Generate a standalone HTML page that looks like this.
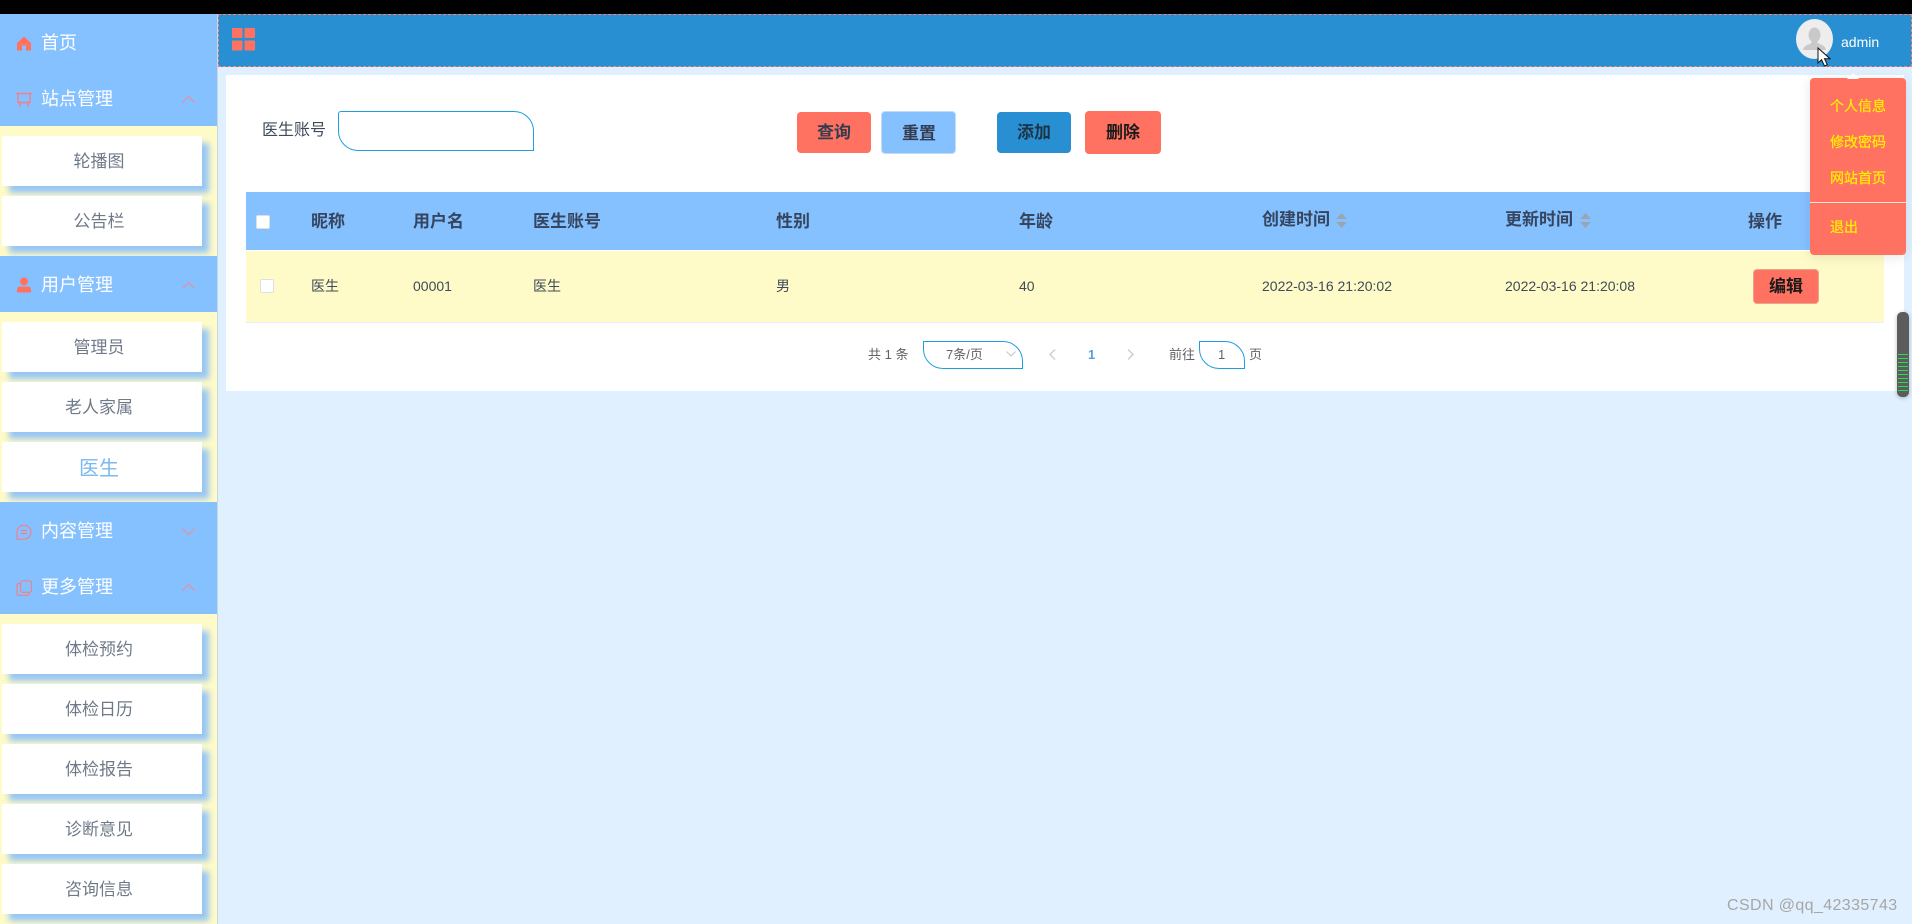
<!DOCTYPE html>
<html lang="zh"><head><meta charset="utf-8"><title>医生</title>
<style>
*{box-sizing:border-box;margin:0;padding:0}
html,body{width:1912px;height:924px;overflow:hidden;background:#e0f0ff;font-family:"Liberation Sans","Noto Sans CJK SC",sans-serif}
.a{position:absolute}
.t{position:absolute;white-space:nowrap;line-height:20px}
.b{position:absolute;background:#86c1ff}
.y{position:absolute;background:#fffbc8;left:0;width:217px}
.m{position:absolute;left:41px;color:#fff;font-size:18px;line-height:24px;white-space:nowrap}
.s{position:absolute;left:2px;width:200px;height:50px;padding-right:6px;background:#fff;box-shadow:7px 7px 6px #97c6f5;color:#6f7a89;font-size:17px;line-height:52px;text-align:center}
.ic{position:absolute;left:16px;width:16px;height:16px}
.ch{position:absolute;left:182px;width:13px;height:8px}
.btn{position:absolute;border-radius:4px;text-align:center;font-size:17px;font-weight:700;color:#333c4f}
.th{position:absolute;font-size:17px;font-weight:700;color:#35455f;line-height:20px;white-space:nowrap}
.td{position:absolute;font-size:14px;color:#3f4a5a;line-height:20px;white-space:nowrap;top:276px}
.p{position:absolute;font-size:13px;color:#606266;line-height:20px;white-space:nowrap;top:345px}
.pop{position:absolute;left:1830px;color:#ffee00;font-size:14px;line-height:20px;white-space:nowrap;-webkit-text-stroke:.25px #ffee00}
.sort{position:absolute;top:213px;width:11px;height:15px}
</style></head><body>
<div class="a" style="left:0;top:0;width:1912px;height:14px;background:#000"></div>

<!-- sidebar -->
<div class="a" style="left:217px;top:14px;width:1px;height:910px;background:#c9d6e3"></div>
<div class="b" style="left:0;top:14px;width:217px;height:112px"></div>
<div class="y" style="top:126px;height:130px"></div>
<div class="b" style="left:0;top:256px;width:217px;height:56px"></div>
<div class="y" style="top:312px;height:190px"></div>
<div class="b" style="left:0;top:502px;width:217px;height:112px"></div>
<div class="y" style="top:614px;height:310px"></div>

<svg class="ic" style="top:35px" viewBox="0 0 16 16"><path d="M8 1.500 1 8v7.500h5V10.500h4v5h5V8z" fill="#ff7262"/></svg>
<div class="m" style="top:31px">首页</div>
<svg class="ic" style="top:92px" viewBox="0 0 16 16" fill="none" stroke="#f0808a" stroke-width="1.400"><path d="M0 1.500h16M2 1.500v9h12v-9M4.500 10.500 3.500 15M11.500 10.500l1 4.500"/></svg>
<div class="m" style="top:87px">站点管理</div>
<svg class="ch" style="top:95px" viewBox="0 0 13 8" fill="none" stroke="#f08a96" stroke-width="1.100"><path d="M.5 7.500 6.500 1.500l6 6"/></svg>

<div class="s" style="top:136px">轮播图</div>
<div class="s" style="top:196px">公告栏</div>

<svg class="ic" style="top:277px" viewBox="0 0 16 16"><circle cx="8" cy="4.500" r="4" fill="#ff7262"/><path d="M1 15.500v-3q0-3 3-3h8q3 0 3 3v3z" fill="#ff7262"/></svg>
<div class="m" style="top:273px">用户管理</div>
<svg class="ch" style="top:281px" viewBox="0 0 13 8" fill="none" stroke="#f08a96" stroke-width="1.100"><path d="M.5 7.500 6.500 1.500l6 6"/></svg>

<div class="s" style="top:322px">管理员</div>
<div class="s" style="top:382px">老人家属</div>
<div class="s" style="top:442px;font-size:20px;color:#7ab8f0;line-height:54px">医生</div>

<svg class="ic" style="top:524px" viewBox="0 0 16 16" fill="none" stroke="#f0808a" stroke-width="1.200"><path d="M1 15.300V8a7 7 0 1 1 7 7.200z"/><path d="M5 6.500h6M5 9.500h6"/></svg>
<div class="m" style="top:519px">内容管理</div>
<svg class="ch" style="top:528px" viewBox="0 0 13 8" fill="none" stroke="#f08a96" stroke-width="1.100"><path d="M.5.500 6.500 6.500l6-6"/></svg>
<svg class="ic" style="top:580px" viewBox="0 0 16 16" fill="none" stroke="#f0808a" stroke-width="1.200"><rect x="4.500" y=".8" width="11" height="11.500" rx="2"/><path d="M4.500 3.500H3Q1 3.500 1 5.500v8.500q0 1.300 1.300 1.300h9q2 0 2-3"/></svg>
<div class="m" style="top:575px">更多管理</div>
<svg class="ch" style="top:583px" viewBox="0 0 13 8" fill="none" stroke="#f08a96" stroke-width="1.100"><path d="M.5 7.500 6.500 1.500l6 6"/></svg>

<div class="s" style="top:624px">体检预约</div>
<div class="s" style="top:684px">体检日历</div>
<div class="s" style="top:744px">体检报告</div>
<div class="s" style="top:804px">诊断意见</div>
<div class="s" style="top:864px">咨询信息</div>

<!-- top nav -->
<div class="a" style="left:218px;top:14px;width:1694px;height:53px;background:#2890d2;border:1px dashed #f5837a"></div>
<svg class="a" style="left:232px;top:28px;width:23px;height:23px" viewBox="0 0 23 23" fill="#ff7262"><rect width="10.500" height="10" rx="1"/><rect x="12.500" width="10.500" height="10" rx="1"/><rect y="12.500" width="10.500" height="10" rx="1"/><rect x="12.500" y="12.500" width="10.500" height="10" rx="1"/></svg>
<div class="a" style="left:1796px;top:19px;width:37px;height:40px;border-radius:50%;background:#eeeeee;overflow:hidden">
<svg width="37" height="40" viewBox="0 0 37 40" fill="#c9c9c9"><ellipse cx="18.500" cy="16" rx="6" ry="7.500"/><path d="M7 31q1-5 7-6l2-2h5l2 2q6 1 7 6z"/></svg></div>
<div class="t" style="left:1841px;top:32px;color:#fff;font-size:14px">admin</div>

<!-- content -->
<div class="a" style="left:226px;top:75px;width:1678px;height:316px;background:#fff"></div>
<div class="t" style="left:262px;top:121px;font-size:16px;color:#3f4a5a">医生账号</div>
<div class="a" style="left:338px;top:111px;width:196px;height:40px;border:1px solid #1e9ee0;border-radius:3px 20px 0 20px;background:#fff"></div>

<div class="btn" style="left:797px;top:112px;width:74px;height:41px;line-height:42px;background:#ff7262">查询</div>
<div class="btn" style="left:881px;top:111px;width:75px;height:43px;line-height:43px;background:#86c1ff;border:1px solid #c4dcf5;padding-left:1px">重置</div>
<div class="btn" style="left:997px;top:112px;width:74px;height:41px;line-height:42px;background:#2890d2;color:#1f3347">添加</div>
<div class="btn" style="left:1085px;top:111px;width:76px;height:43px;line-height:44px;background:#ff7262;color:#1a1a1a">删除</div>

<!-- table -->
<div class="a" style="left:246px;top:192px;width:1638px;height:58px;background:#86c1ff"></div>
<div class="a" style="left:246px;top:251px;width:1638px;height:72px;background:#fffbc8;border-bottom:1px solid #ebeef5"></div>
<div class="a" style="left:256px;top:215px;width:14px;height:14px;background:#fff;border:1px solid #dcdfe6;border-radius:2px"></div>
<div class="a" style="left:260px;top:279px;width:14px;height:14px;background:#fff;border:1px solid #dcdfe6;border-radius:2px"></div>
<div class="th" style="left:311px;top:212px">昵称</div>
<div class="th" style="left:413px;top:212px">用户名</div>
<div class="th" style="left:533px;top:212px">医生账号</div>
<div class="th" style="left:776px;top:212px">性别</div>
<div class="th" style="left:1019px;top:212px">年龄</div>
<div class="th" style="left:1262px;top:210px">创建时间</div>
<svg class="sort" style="left:1336px" viewBox="0 0 11 15" fill="#9aa5b3"><path d="M5.500 0 11 6H0zM5.500 15 0 9h11z"/></svg>
<div class="th" style="left:1505px;top:210px">更新时间</div>
<svg class="sort" style="left:1580px" viewBox="0 0 11 15" fill="#9aa5b3"><path d="M5.500 0 11 6H0zM5.500 15 0 9h11z"/></svg>
<div class="th" style="left:1748px;top:212px">操作</div>

<div class="td" style="left:311px">医生</div>
<div class="td" style="left:413px">00001</div>
<div class="td" style="left:533px">医生</div>
<div class="td" style="left:776px">男</div>
<div class="td" style="left:1019px">40</div>
<div class="td" style="left:1262px">2022-03-16 21:20:02</div>
<div class="td" style="left:1505px">2022-03-16 21:20:08</div>
<div class="btn" style="left:1753px;top:269px;width:66px;height:35px;line-height:33px;background:#ff7262;color:#1a1a1a;border:1px solid #e3a98a">编辑</div>

<!-- pagination -->
<div class="p" style="left:868px">共 1 条</div>
<div class="a" style="left:923px;top:341px;width:100px;height:28px;border:1px solid #1e9ee0;border-radius:0 20px 0 20px"></div>
<div class="p" style="left:946px;font-size:13px">7条/页</div>
<svg class="a" style="left:1006px;top:351px;width:10px;height:6px" viewBox="0 0 10 6" fill="none" stroke="#c0c4cc"><path d="M.5.500 5 5 9.500.500"/></svg>
<svg class="a" style="left:1049px;top:349px;width:7px;height:11px" viewBox="0 0 7 11" fill="none" stroke="#c8ccd4" stroke-width="1.400"><path d="M6 .5 1 5.500l5 5"/></svg>
<div class="p" style="left:1088px;font-weight:700;color:#4fa0e8">1</div>
<svg class="a" style="left:1127px;top:349px;width:7px;height:11px" viewBox="0 0 7 11" fill="none" stroke="#c8ccd4" stroke-width="1.400"><path d="M1 .5l5 5-5 5"/></svg>
<div class="p" style="left:1169px">前往</div>
<div class="a" style="left:1199px;top:341px;width:46px;height:28px;border:1px solid #1e9ee0;border-radius:0 20px 0 20px"></div>
<div class="p" style="left:1218px">1</div>
<div class="p" style="left:1249px">页</div>

<!-- scrollbar -->
<div class="a" style="left:1897px;top:312px;width:12px;height:85px;border-radius:5px;background:#5c5c5c;box-shadow:0 1px 4px rgba(90,90,90,.4)"></div>
<div class="a" style="left:1898px;top:354px;width:10px;height:40px;background:repeating-linear-gradient(to bottom,#22e04f 0,#22e04f 1px,#5c5c5c 1px,#5c5c5c 4px)"></div>

<!-- popup -->
<div class="a" style="left:1810px;top:78px;width:96px;height:177px;background:#ff7262;border-radius:4px;box-shadow:0 2px 12px rgba(0,0,0,.1)"></div>
<svg class="a" style="left:1847px;top:73px;width:12px;height:6px" viewBox="0 0 12 6" fill="#fff"><path d="M6 0 12 6H0z"/></svg>
<div class="pop" style="top:96px">个人信息</div>
<div class="pop" style="top:132px">修改密码</div>
<div class="pop" style="top:168px">网站首页</div>
<div class="a" style="left:1810px;top:202px;width:96px;height:1px;background:#ffe2dc"></div>
<div class="pop" style="top:217px">退出</div>

<!-- cursor -->
<svg class="a" style="left:1817px;top:47px;width:14px;height:20px" viewBox="0 0 14 20"><path d="M1 1v15l3.500-3.300L7.500 19l2.800-1.300-2.800-6H13z" fill="#fff" stroke="#111" stroke-width="1"/></svg>

<div class="t" style="left:1727px;top:896px;font-size:16px;color:#a6a6a6;letter-spacing:.39px">CSDN @qq_42335743</div>
</body></html>
